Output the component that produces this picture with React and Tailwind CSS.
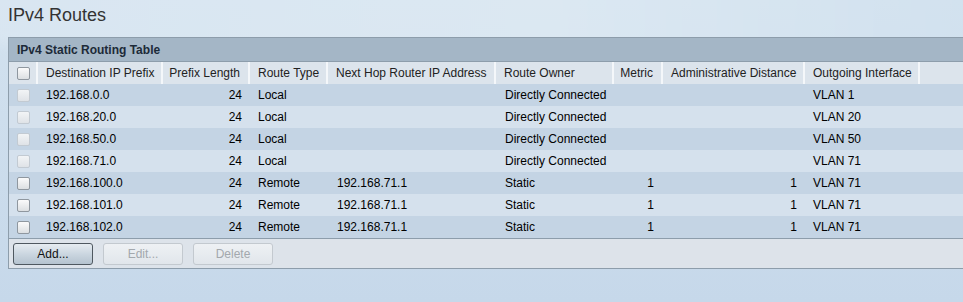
import React from "react";

const cols = "grid-cols-[29px_125px_87px_78px_168px_118px_49px_142px_115px_1fr]";

const headers = [
  "Destination IP Prefix",
  "Prefix Length",
  "Route Type",
  "Next Hop Router IP Address",
  "Route Owner",
  "Metric",
  "Administrative Distance",
  "Outgoing Interface",
];

const routes = [
  { dest: "192.168.0.0", len: 24, type: "Local", hop: "", owner: "Directly Connected", metric: "", dist: "", vlan: "VLAN 1" },
  { dest: "192.168.20.0", len: 24, type: "Local", hop: "", owner: "Directly Connected", metric: "", dist: "", vlan: "VLAN 20" },
  { dest: "192.168.50.0", len: 24, type: "Local", hop: "", owner: "Directly Connected", metric: "", dist: "", vlan: "VLAN 50" },
  { dest: "192.168.71.0", len: 24, type: "Local", hop: "", owner: "Directly Connected", metric: "", dist: "", vlan: "VLAN 71" },
  { dest: "192.168.100.0", len: 24, type: "Remote", hop: "192.168.71.1", owner: "Static", metric: 1, dist: 1, vlan: "VLAN 71" },
  { dest: "192.168.101.0", len: 24, type: "Remote", hop: "192.168.71.1", owner: "Static", metric: 1, dist: 1, vlan: "VLAN 71" },
  { dest: "192.168.102.0", len: 24, type: "Remote", hop: "192.168.71.1", owner: "Static", metric: 1, dist: 1, vlan: "VLAN 71" },
];

function Check({ disabled }) {
  return (
    <div
      className={
        "w-[13px] h-[13px] rounded-[2px] border " +
        (disabled
          ? "border-[#c2cad2] bg-gradient-to-b from-[#f2f4f6] to-[#dfe3e7]"
          : "border-[#8f979f] bg-gradient-to-b from-[#fbfbfb] to-[#dcdfe2]")
      }
    />
  );
}

function Button({ label, disabled }) {
  return (
    <div
      className={
        "w-[80px] h-[22px] rounded-[3px] border flex items-center justify-center " +
        (disabled
          ? "border-[#c3c9cf] text-[#a3a8ad] bg-gradient-to-b from-[#eef1f4] to-[#e1e6eb]"
          : "border-[#4f5860] text-[#111] bg-gradient-to-b from-[#e6ecf1] via-[#cbd6e0] to-[#b5c3cf]")
      }
    >
      {label}
    </div>
  );
}

export default function App() {
  return (
    <div
      className="w-[963px] h-[302px] overflow-hidden bg-gradient-to-b from-[#d3e2ef] to-[#c6d8ea] relative text-[12px]"
      style={{ fontFamily: '"Liberation Sans", Arial, sans-serif' }}
    >
      {/* background swoosh */}
      <div className="absolute -top-[40px] -left-[100px] w-[1300px] h-[110px] rounded-[50%] bg-gradient-to-r from-[#dde9f3] via-[#e2edf5] to-[#c9dcec] opacity-60 blur-[6px]" />
      <div className="relative h-[37px] pl-[8px] pt-[3px] text-[18px] leading-[24px] text-[#333]">IPv4 Routes</div>
      <div className="relative ml-[8px] w-[980px] border border-[#8d9dab] bg-[#dde3ea] whitespace-nowrap">
        <div className="h-[24px] bg-[#a4b6c6] border-b border-[#8d9dab] pl-[8px] flex items-center font-bold text-[#1c2a38]">
          IPv4 Static Routing Table
        </div>
        <div className={"grid h-[22px] bg-[#dce4ec] text-[#222] " + cols}>
          <div className="flex items-center pl-[8px] border-r-2 border-[#f4f7fa]">
            <Check />
          </div>
          {headers.map((h, i) => (
            <div
              key={h}
              className={
                "flex items-center px-[8px] border-r-2 border-[#f4f7fa] overflow-hidden " +
                (i === 1 || i === 5 ? "justify-end" : "")
              }
            >
              {h}
            </div>
          ))}
          <div />
        </div>
        {routes.map((r, i) => (
          <div
            key={r.dest}
            className={
              "grid h-[22px] text-[#000] " +
              cols +
              (i % 2 === 0 ? " bg-[#c4d4e4]" : " bg-[#d5e1ed]")
            }
          >
            <div className="flex items-center pl-[8px]">
              <Check disabled={r.type === "Local"} />
            </div>
            <div className="flex items-center px-[8px]">{r.dest}</div>
            <div className="flex items-center justify-end px-[8px]">{r.len}</div>
            <div className="flex items-center px-[8px]">{r.type}</div>
            <div className="flex items-center px-[9px]">{r.hop}</div>
            <div className="flex items-center pl-[9px]">{r.owner}</div>
            <div className="flex items-center justify-end px-[9px]">{r.metric}</div>
            <div className="flex items-center justify-end px-[8px]">{r.dist}</div>
            <div className="flex items-center px-[8px]">{r.vlan}</div>
            <div />
          </div>
        ))}
        <div className="h-[30px] border-t border-[#8d9dab] flex items-center gap-[10px] pl-[4px] bg-[#dde3ea]">
          <Button label="Add..." />
          <Button label="Edit..." disabled />
          <Button label="Delete" disabled />
        </div>
      </div>
    </div>
  );
}
